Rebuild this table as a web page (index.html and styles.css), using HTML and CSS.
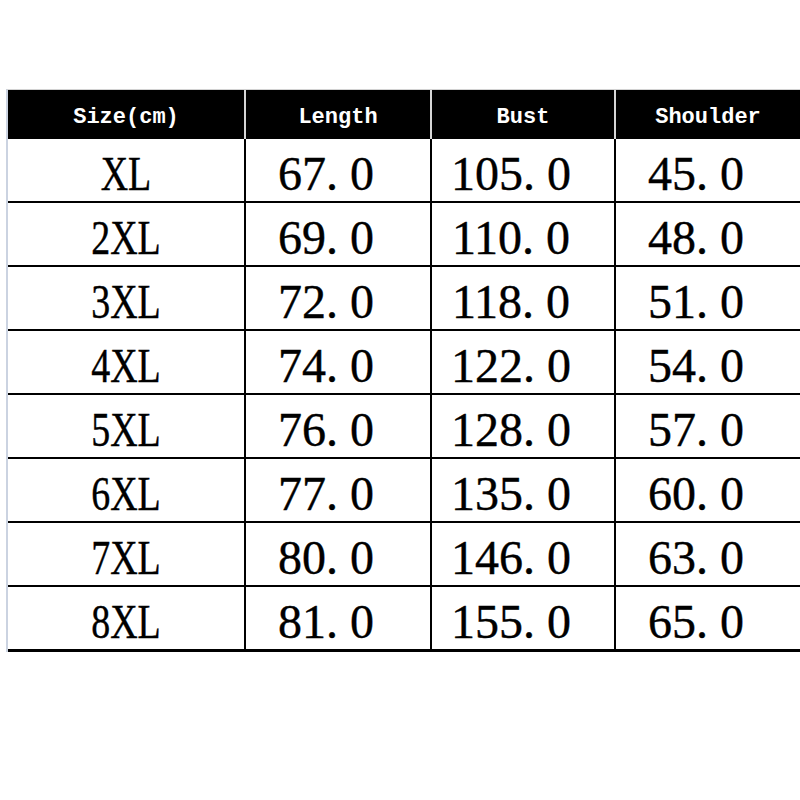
FILE: index.html
```html
<!DOCTYPE html>
<html lang="en">
<head>
<meta charset="utf-8">
<title>Size chart</title>
<link rel="stylesheet" href="styles.css">
</head>
<body>
<div class="sheet">
  <div class="grid head">
    <div class="hcell">Size(cm)</div>
    <div class="hcell">Length</div>
    <div class="hcell">Bust</div>
    <div class="hcell">Shoulder</div>
  </div>
  <div class="grid rows">
    <div class="cell size"><span class="cond">XL</span></div><div class="cell num">67. 0</div><div class="cell num">105. 0</div><div class="cell num">45. 0</div>
    <div class="cell size"><span class="cond">2XL</span></div><div class="cell num">69. 0</div><div class="cell num">110. 0</div><div class="cell num">48. 0</div>
    <div class="cell size"><span class="cond">3XL</span></div><div class="cell num">72. 0</div><div class="cell num">118. 0</div><div class="cell num">51. 0</div>
    <div class="cell size"><span class="cond">4XL</span></div><div class="cell num">74. 0</div><div class="cell num">122. 0</div><div class="cell num">54. 0</div>
    <div class="cell size"><span class="cond">5XL</span></div><div class="cell num">76. 0</div><div class="cell num">128. 0</div><div class="cell num">57. 0</div>
    <div class="cell size"><span class="cond">6XL</span></div><div class="cell num">77. 0</div><div class="cell num">135. 0</div><div class="cell num">60. 0</div>
    <div class="cell size"><span class="cond">7XL</span></div><div class="cell num">80. 0</div><div class="cell num">146. 0</div><div class="cell num">63. 0</div>
    <div class="cell size"><span class="cond">8XL</span></div><div class="cell num">81. 0</div><div class="cell num">155. 0</div><div class="cell num">65. 0</div>
  </div>
</div>
</body>
</html>
```

FILE: styles.css
```css
html, body {
  margin: 0;
  padding: 0;
  background: #ffffff;
  overflow: hidden;
}

.sheet {
  margin: 89px 0 0 6px;
  width: 794px;
  border-left: 2px solid #cbd3e1;
  border-top: 1px solid #d2d2d2;
}

.grid {
  display: grid;
  grid-template-columns: 236px 184px 182px 184px;
  column-gap: 2px;
}

.head {
  background: #d6d6d6;
  height: 49px;
}

.hcell {
  background: #000000;
  color: #ffffff;
  font-family: "Liberation Mono", "DejaVu Sans Mono", monospace;
  font-weight: bold;
  font-size: 22px;
  line-height: 24px;
  padding-top: 16px;
  text-align: center;
}

.rows {
  background: #000000;
  row-gap: 2px;
  grid-auto-rows: 62px;
  border-bottom: 3px solid #000000;
}

.cell {
  background: #ffffff;
  display: flex;
  justify-content: center;
  align-items: flex-start;
  padding-top: 7px;
  box-sizing: border-box;
  font-family: "Liberation Serif", "Times New Roman", serif;
  font-size: 48px;
  line-height: 55px;
  color: #000000;
  white-space: pre;
  -webkit-text-stroke: 0.4px #000000;
}

.num {
  padding-right: 24px;
}

.cond {
  display: inline-block;
  transform: scaleX(0.79);
  transform-origin: center;
}
```
